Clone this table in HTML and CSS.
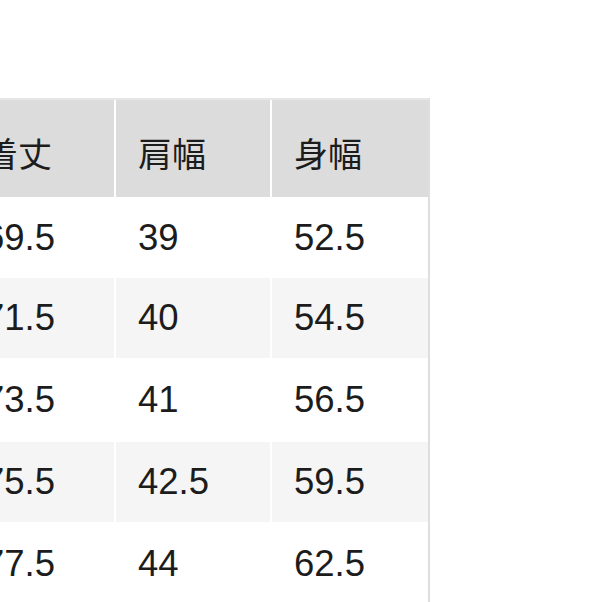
FILE: index.html
```html
<!DOCTYPE html>
<html lang="ja">
<head>
<meta charset="utf-8">
<link rel="stylesheet" href="styles.css">
</head>
<body>
<div class="page">
  <div class="size-table">
    <div class="cell head">着丈</div>
    <div class="cell head">肩幅</div>
    <div class="cell head">身幅</div>

    <div class="cell">69.5</div>
    <div class="cell">39</div>
    <div class="cell">52.5</div>

    <div class="cell alt">71.5</div>
    <div class="cell alt">40</div>
    <div class="cell alt">54.5</div>

    <div class="cell">73.5</div>
    <div class="cell">41</div>
    <div class="cell">56.5</div>

    <div class="cell alt">75.5</div>
    <div class="cell alt">42.5</div>
    <div class="cell alt">59.5</div>

    <div class="cell">77.5</div>
    <div class="cell">44</div>
    <div class="cell">62.5</div>
  </div>
</div>
</body>
</html>
```

FILE: styles.css
```css
html, body {
  margin: 0;
  padding: 0;
  background: #ffffff;
  overflow: hidden;
}

.page {
  width: 602px;
  height: 602px;
  overflow: hidden;
  padding-top: 98px;
  box-sizing: border-box;
}

.size-table {
  margin-left: -38px;
  width: 466px;
  display: grid;
  grid-template-columns: 152px 154px 156px;
  grid-template-rows: 97px 77px 80px 80px 80px 80px;
  column-gap: 2px;
  row-gap: 2px;
  border-top: 2px solid #e6e6e6;
  border-right: 2px solid #dedede;
  background: #ffffff;
  font-family: "Liberation Sans", "Noto Sans CJK JP", sans-serif;
  font-size: 36.5px;
  color: #1c1c1c;
}

.cell {
  display: flex;
  align-items: center;
  padding-left: 22px;
  padding-top: 1px;
  background: #ffffff;
  line-height: 1;
}

.cell.head {
  background: #dcdcdc;
  padding-top: 12px;
  font-size: 34px;
  box-sizing: border-box;
}

.cell.alt {
  background: #f5f5f5;
}
```
